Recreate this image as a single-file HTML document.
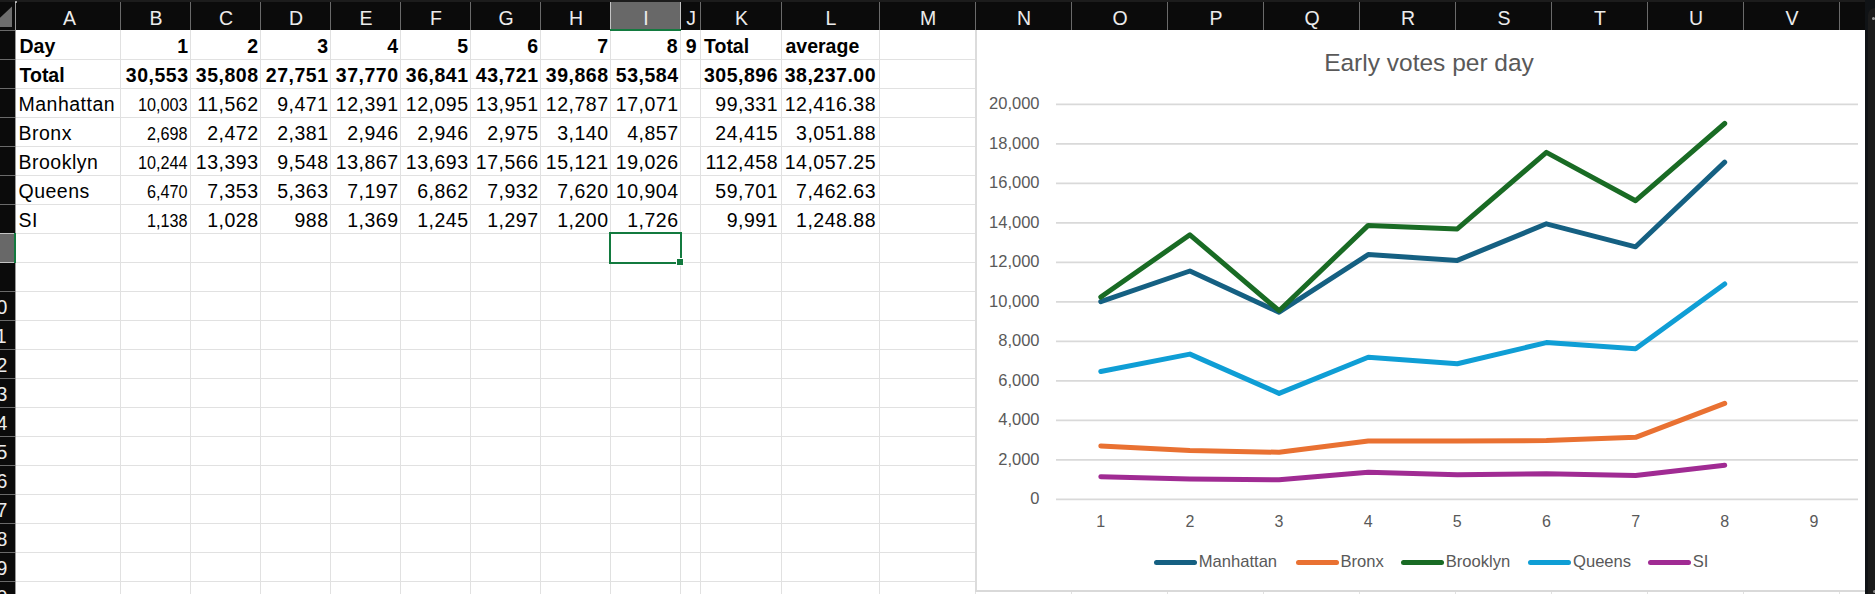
<!DOCTYPE html><html><head><meta charset="utf-8"><style>
html,body{margin:0;padding:0;}
body{width:1875px;height:594px;overflow:hidden;background:#fff;position:relative;font-family:"Liberation Sans",sans-serif;}
.a{position:absolute;}
.hd{position:absolute;top:2px;height:28px;background:#0b0b0b;}
.hl{position:absolute;top:4px;height:28px;line-height:28px;color:#ececec;font-size:19.5px;text-align:center;}
.c{position:absolute;height:29px;line-height:29px;font-size:19.5px;letter-spacing:0.5px;color:#000;white-space:nowrap;}
.r{text-align:right;}
.b{font-weight:bold;}
.t{letter-spacing:0;}
.sm{font-size:17.5px;letter-spacing:0;transform:translate(-1px,1px) scaleX(0.925);transform-origin:100% 50%;}
</style></head><body><div class="a" style="left:0;top:0;width:1875px;height:2px;background:#1c1c1c"></div>
<div class="hd" style="left:0;width:1875px"></div>
<div class="a" style="left:0;top:30px;width:15px;height:564px;background:#0b0b0b"></div>
<svg class="a" style="left:0;top:0" width="1875" height="594"><line x1="120.5" y1="30" x2="120.5" y2="594" stroke="#e1e1e1" stroke-width="1"/><line x1="190.5" y1="30" x2="190.5" y2="594" stroke="#e1e1e1" stroke-width="1"/><line x1="260.5" y1="30" x2="260.5" y2="594" stroke="#e1e1e1" stroke-width="1"/><line x1="330.5" y1="30" x2="330.5" y2="594" stroke="#e1e1e1" stroke-width="1"/><line x1="400.5" y1="30" x2="400.5" y2="594" stroke="#e1e1e1" stroke-width="1"/><line x1="470.5" y1="30" x2="470.5" y2="594" stroke="#e1e1e1" stroke-width="1"/><line x1="540.5" y1="30" x2="540.5" y2="594" stroke="#e1e1e1" stroke-width="1"/><line x1="610.5" y1="30" x2="610.5" y2="594" stroke="#e1e1e1" stroke-width="1"/><line x1="680.5" y1="30" x2="680.5" y2="594" stroke="#e1e1e1" stroke-width="1"/><line x1="700.5" y1="30" x2="700.5" y2="594" stroke="#e1e1e1" stroke-width="1"/><line x1="781.5" y1="30" x2="781.5" y2="594" stroke="#e1e1e1" stroke-width="1"/><line x1="879.5" y1="30" x2="879.5" y2="594" stroke="#e1e1e1" stroke-width="1"/><line x1="975.5" y1="30" x2="975.5" y2="594" stroke="#e1e1e1" stroke-width="1"/><line x1="1071.5" y1="30" x2="1071.5" y2="594" stroke="#e1e1e1" stroke-width="1"/><line x1="1167.5" y1="30" x2="1167.5" y2="594" stroke="#e1e1e1" stroke-width="1"/><line x1="1263.5" y1="30" x2="1263.5" y2="594" stroke="#e1e1e1" stroke-width="1"/><line x1="1359.5" y1="30" x2="1359.5" y2="594" stroke="#e1e1e1" stroke-width="1"/><line x1="1455.5" y1="30" x2="1455.5" y2="594" stroke="#e1e1e1" stroke-width="1"/><line x1="1551.5" y1="30" x2="1551.5" y2="594" stroke="#e1e1e1" stroke-width="1"/><line x1="1647.5" y1="30" x2="1647.5" y2="594" stroke="#e1e1e1" stroke-width="1"/><line x1="1743.5" y1="30" x2="1743.5" y2="594" stroke="#e1e1e1" stroke-width="1"/><line x1="1839.5" y1="30" x2="1839.5" y2="594" stroke="#e1e1e1" stroke-width="1"/><line x1="15" y1="59.5" x2="1875" y2="59.5" stroke="#e1e1e1" stroke-width="1"/><line x1="15" y1="88.5" x2="1875" y2="88.5" stroke="#e1e1e1" stroke-width="1"/><line x1="15" y1="117.5" x2="1875" y2="117.5" stroke="#e1e1e1" stroke-width="1"/><line x1="15" y1="146.5" x2="1875" y2="146.5" stroke="#e1e1e1" stroke-width="1"/><line x1="15" y1="175.5" x2="1875" y2="175.5" stroke="#e1e1e1" stroke-width="1"/><line x1="15" y1="204.5" x2="1875" y2="204.5" stroke="#e1e1e1" stroke-width="1"/><line x1="15" y1="233.5" x2="1875" y2="233.5" stroke="#e1e1e1" stroke-width="1"/><line x1="15" y1="262.5" x2="1875" y2="262.5" stroke="#e1e1e1" stroke-width="1"/><line x1="15" y1="291.5" x2="1875" y2="291.5" stroke="#e1e1e1" stroke-width="1"/><line x1="15" y1="320.5" x2="1875" y2="320.5" stroke="#e1e1e1" stroke-width="1"/><line x1="15" y1="349.5" x2="1875" y2="349.5" stroke="#e1e1e1" stroke-width="1"/><line x1="15" y1="378.5" x2="1875" y2="378.5" stroke="#e1e1e1" stroke-width="1"/><line x1="15" y1="407.5" x2="1875" y2="407.5" stroke="#e1e1e1" stroke-width="1"/><line x1="15" y1="436.5" x2="1875" y2="436.5" stroke="#e1e1e1" stroke-width="1"/><line x1="15" y1="465.5" x2="1875" y2="465.5" stroke="#e1e1e1" stroke-width="1"/><line x1="15" y1="494.5" x2="1875" y2="494.5" stroke="#e1e1e1" stroke-width="1"/><line x1="15" y1="523.5" x2="1875" y2="523.5" stroke="#e1e1e1" stroke-width="1"/><line x1="15" y1="552.5" x2="1875" y2="552.5" stroke="#e1e1e1" stroke-width="1"/><line x1="15" y1="581.5" x2="1875" y2="581.5" stroke="#e1e1e1" stroke-width="1"/><line x1="120.5" y1="2" x2="120.5" y2="30" stroke="#6a6a6a" stroke-width="1"/><line x1="190.5" y1="2" x2="190.5" y2="30" stroke="#6a6a6a" stroke-width="1"/><line x1="260.5" y1="2" x2="260.5" y2="30" stroke="#6a6a6a" stroke-width="1"/><line x1="330.5" y1="2" x2="330.5" y2="30" stroke="#6a6a6a" stroke-width="1"/><line x1="400.5" y1="2" x2="400.5" y2="30" stroke="#6a6a6a" stroke-width="1"/><line x1="470.5" y1="2" x2="470.5" y2="30" stroke="#6a6a6a" stroke-width="1"/><line x1="540.5" y1="2" x2="540.5" y2="30" stroke="#6a6a6a" stroke-width="1"/><line x1="610.5" y1="2" x2="610.5" y2="30" stroke="#6a6a6a" stroke-width="1"/><line x1="680.5" y1="2" x2="680.5" y2="30" stroke="#6a6a6a" stroke-width="1"/><line x1="700.5" y1="2" x2="700.5" y2="30" stroke="#6a6a6a" stroke-width="1"/><line x1="781.5" y1="2" x2="781.5" y2="30" stroke="#6a6a6a" stroke-width="1"/><line x1="879.5" y1="2" x2="879.5" y2="30" stroke="#6a6a6a" stroke-width="1"/><line x1="975.5" y1="2" x2="975.5" y2="30" stroke="#6a6a6a" stroke-width="1"/><line x1="1071.5" y1="2" x2="1071.5" y2="30" stroke="#6a6a6a" stroke-width="1"/><line x1="1167.5" y1="2" x2="1167.5" y2="30" stroke="#6a6a6a" stroke-width="1"/><line x1="1263.5" y1="2" x2="1263.5" y2="30" stroke="#6a6a6a" stroke-width="1"/><line x1="1359.5" y1="2" x2="1359.5" y2="30" stroke="#6a6a6a" stroke-width="1"/><line x1="1455.5" y1="2" x2="1455.5" y2="30" stroke="#6a6a6a" stroke-width="1"/><line x1="1551.5" y1="2" x2="1551.5" y2="30" stroke="#6a6a6a" stroke-width="1"/><line x1="1647.5" y1="2" x2="1647.5" y2="30" stroke="#6a6a6a" stroke-width="1"/><line x1="1743.5" y1="2" x2="1743.5" y2="30" stroke="#6a6a6a" stroke-width="1"/><line x1="1839.5" y1="2" x2="1839.5" y2="30" stroke="#6a6a6a" stroke-width="1"/><line x1="0" y1="30.5" x2="15" y2="30.5" stroke="#6a6a6a" stroke-width="1"/><line x1="0" y1="59.5" x2="15" y2="59.5" stroke="#6a6a6a" stroke-width="1"/><line x1="0" y1="88.5" x2="15" y2="88.5" stroke="#6a6a6a" stroke-width="1"/><line x1="0" y1="117.5" x2="15" y2="117.5" stroke="#6a6a6a" stroke-width="1"/><line x1="0" y1="146.5" x2="15" y2="146.5" stroke="#6a6a6a" stroke-width="1"/><line x1="0" y1="175.5" x2="15" y2="175.5" stroke="#6a6a6a" stroke-width="1"/><line x1="0" y1="204.5" x2="15" y2="204.5" stroke="#6a6a6a" stroke-width="1"/><line x1="0" y1="233.5" x2="15" y2="233.5" stroke="#6a6a6a" stroke-width="1"/><line x1="0" y1="262.5" x2="15" y2="262.5" stroke="#6a6a6a" stroke-width="1"/><line x1="0" y1="291.5" x2="15" y2="291.5" stroke="#6a6a6a" stroke-width="1"/><line x1="0" y1="320.5" x2="15" y2="320.5" stroke="#6a6a6a" stroke-width="1"/><line x1="0" y1="349.5" x2="15" y2="349.5" stroke="#6a6a6a" stroke-width="1"/><line x1="0" y1="378.5" x2="15" y2="378.5" stroke="#6a6a6a" stroke-width="1"/><line x1="0" y1="407.5" x2="15" y2="407.5" stroke="#6a6a6a" stroke-width="1"/><line x1="0" y1="436.5" x2="15" y2="436.5" stroke="#6a6a6a" stroke-width="1"/><line x1="0" y1="465.5" x2="15" y2="465.5" stroke="#6a6a6a" stroke-width="1"/><line x1="0" y1="494.5" x2="15" y2="494.5" stroke="#6a6a6a" stroke-width="1"/><line x1="0" y1="523.5" x2="15" y2="523.5" stroke="#6a6a6a" stroke-width="1"/><line x1="0" y1="552.5" x2="15" y2="552.5" stroke="#6a6a6a" stroke-width="1"/><line x1="0" y1="581.5" x2="15" y2="581.5" stroke="#6a6a6a" stroke-width="1"/><line x1="15.5" y1="2" x2="15.5" y2="594" stroke="#9a9a9a" stroke-width="1"/></svg>
<div class="hl" style="left:-27.5px;top:293px;width:48px;height:29px;line-height:29px;text-align:center">10</div>
<div class="hl" style="left:-27.5px;top:322px;width:48px;height:29px;line-height:29px;text-align:center">11</div>
<div class="hl" style="left:-27.5px;top:351px;width:48px;height:29px;line-height:29px;text-align:center">12</div>
<div class="hl" style="left:-27.5px;top:380px;width:48px;height:29px;line-height:29px;text-align:center">13</div>
<div class="hl" style="left:-27.5px;top:409px;width:48px;height:29px;line-height:29px;text-align:center">14</div>
<div class="hl" style="left:-27.5px;top:438px;width:48px;height:29px;line-height:29px;text-align:center">15</div>
<div class="hl" style="left:-27.5px;top:467px;width:48px;height:29px;line-height:29px;text-align:center">16</div>
<div class="hl" style="left:-27.5px;top:496px;width:48px;height:29px;line-height:29px;text-align:center">17</div>
<div class="hl" style="left:-27.5px;top:525px;width:48px;height:29px;line-height:29px;text-align:center">18</div>
<div class="hl" style="left:-27.5px;top:554px;width:48px;height:29px;line-height:29px;text-align:center">19</div>
<div class="hl" style="left:-27.5px;top:583px;width:48px;height:29px;line-height:29px;text-align:center">20</div>
<div class="a" style="left:610px;top:2px;width:71px;height:27px;background:#686868;border-left:1px solid #c4c4c4;border-right:1px solid #c4c4c4;box-sizing:border-box"></div>
<div class="a" style="left:610px;top:29px;width:71px;height:2px;background:#137a3f"></div>
<div class="a" style="left:0;top:233px;width:14px;height:30px;background:#686868;border-top:1px solid #c4c4c4;border-bottom:1px solid #c4c4c4;box-sizing:border-box"></div>
<div class="a" style="left:14px;top:233px;width:2px;height:30px;background:#137a3f"></div>
<div class="a" style="left:15px;top:1px;width:2px;height:2px;background:#d0d0d0;border-radius:50%"></div>
<svg class="a" style="left:0;top:0" width="15" height="30"><polygon points="-10,27 12,27 12,6.5" fill="#6e6e6e"/></svg>
<div class="hl" style="left:18px;width:103px">A</div>
<div class="hl" style="left:121px;width:70px">B</div>
<div class="hl" style="left:191px;width:70px">C</div>
<div class="hl" style="left:261px;width:70px">D</div>
<div class="hl" style="left:331px;width:70px">E</div>
<div class="hl" style="left:401px;width:70px">F</div>
<div class="hl" style="left:471px;width:70px">G</div>
<div class="hl" style="left:541px;width:70px">H</div>
<div class="hl" style="left:611px;width:70px">I</div>
<div class="hl" style="left:681px;width:20px">J</div>
<div class="hl" style="left:701px;width:81px">K</div>
<div class="hl" style="left:782px;width:98px">L</div>
<div class="hl" style="left:880px;width:96px">M</div>
<div class="hl" style="left:976px;width:96px">N</div>
<div class="hl" style="left:1072px;width:96px">O</div>
<div class="hl" style="left:1168px;width:96px">P</div>
<div class="hl" style="left:1264px;width:96px">Q</div>
<div class="hl" style="left:1360px;width:96px">R</div>
<div class="hl" style="left:1456px;width:96px">S</div>
<div class="hl" style="left:1552px;width:96px">T</div>
<div class="hl" style="left:1648px;width:96px">U</div>
<div class="hl" style="left:1744px;width:96px">V</div>
<div class="hl" style="left:1840px;width:96px">W</div>
<div class="c b t" style="left:19.5px;top:32px">Day</div>
<div class="c r b" style="left:120px;top:32px;width:68.5px">1</div>
<div class="c r b" style="left:190px;top:32px;width:68.5px">2</div>
<div class="c r b" style="left:260px;top:32px;width:68.5px">3</div>
<div class="c r b" style="left:330px;top:32px;width:68.5px">4</div>
<div class="c r b" style="left:400px;top:32px;width:68.5px">5</div>
<div class="c r b" style="left:470px;top:32px;width:68.5px">6</div>
<div class="c r b" style="left:540px;top:32px;width:68.5px">7</div>
<div class="c r b" style="left:609.5px;top:32px;width:68.5px">8</div>
<div class="c r b" style="left:678.5px;top:32px;width:18.5px">9</div>
<div class="c b t" style="left:704px;top:32px">Total</div>
<div class="c b t" style="left:785.5px;top:32px">average</div>
<div class="c b t" style="left:19.5px;top:61px">Total</div>
<div class="c r b" style="left:120px;top:61px;width:68.5px">30,553</div>
<div class="c r b" style="left:190px;top:61px;width:68.5px">35,808</div>
<div class="c r b" style="left:260px;top:61px;width:68.5px">27,751</div>
<div class="c r b" style="left:330px;top:61px;width:68.5px">37,770</div>
<div class="c r b" style="left:400px;top:61px;width:68.5px">36,841</div>
<div class="c r b" style="left:470px;top:61px;width:68.5px">43,721</div>
<div class="c r b" style="left:540px;top:61px;width:68.5px">39,868</div>
<div class="c r b" style="left:610px;top:61px;width:68.5px">53,584</div>
<div class="c r b" style="left:700px;top:61px;width:78px">305,896</div>
<div class="c r b" style="left:781px;top:61px;width:95px">38,237.00</div>
<div class="c" style="left:18.5px;top:90px">Manhattan</div>
<div class="c r sm" style="left:120px;top:90px;width:68.5px">10,003</div>
<div class="c r" style="left:190px;top:90px;width:68.5px">11,562</div>
<div class="c r" style="left:260px;top:90px;width:68.5px">9,471</div>
<div class="c r" style="left:330px;top:90px;width:68.5px">12,391</div>
<div class="c r" style="left:400px;top:90px;width:68.5px">12,095</div>
<div class="c r" style="left:470px;top:90px;width:68.5px">13,951</div>
<div class="c r" style="left:540px;top:90px;width:68.5px">12,787</div>
<div class="c r" style="left:610px;top:90px;width:68.5px">17,071</div>
<div class="c r" style="left:700px;top:90px;width:78px">99,331</div>
<div class="c r" style="left:781px;top:90px;width:95px">12,416.38</div>
<div class="c" style="left:18.5px;top:119px">Bronx</div>
<div class="c r sm" style="left:120px;top:119px;width:68.5px">2,698</div>
<div class="c r" style="left:190px;top:119px;width:68.5px">2,472</div>
<div class="c r" style="left:260px;top:119px;width:68.5px">2,381</div>
<div class="c r" style="left:330px;top:119px;width:68.5px">2,946</div>
<div class="c r" style="left:400px;top:119px;width:68.5px">2,946</div>
<div class="c r" style="left:470px;top:119px;width:68.5px">2,975</div>
<div class="c r" style="left:540px;top:119px;width:68.5px">3,140</div>
<div class="c r" style="left:610px;top:119px;width:68.5px">4,857</div>
<div class="c r" style="left:700px;top:119px;width:78px">24,415</div>
<div class="c r" style="left:781px;top:119px;width:95px">3,051.88</div>
<div class="c" style="left:18.5px;top:148px">Brooklyn</div>
<div class="c r sm" style="left:120px;top:148px;width:68.5px">10,244</div>
<div class="c r" style="left:190px;top:148px;width:68.5px">13,393</div>
<div class="c r" style="left:260px;top:148px;width:68.5px">9,548</div>
<div class="c r" style="left:330px;top:148px;width:68.5px">13,867</div>
<div class="c r" style="left:400px;top:148px;width:68.5px">13,693</div>
<div class="c r" style="left:470px;top:148px;width:68.5px">17,566</div>
<div class="c r" style="left:540px;top:148px;width:68.5px">15,121</div>
<div class="c r" style="left:610px;top:148px;width:68.5px">19,026</div>
<div class="c r" style="left:700px;top:148px;width:78px">112,458</div>
<div class="c r" style="left:781px;top:148px;width:95px">14,057.25</div>
<div class="c" style="left:18.5px;top:177px">Queens</div>
<div class="c r sm" style="left:120px;top:177px;width:68.5px">6,470</div>
<div class="c r" style="left:190px;top:177px;width:68.5px">7,353</div>
<div class="c r" style="left:260px;top:177px;width:68.5px">5,363</div>
<div class="c r" style="left:330px;top:177px;width:68.5px">7,197</div>
<div class="c r" style="left:400px;top:177px;width:68.5px">6,862</div>
<div class="c r" style="left:470px;top:177px;width:68.5px">7,932</div>
<div class="c r" style="left:540px;top:177px;width:68.5px">7,620</div>
<div class="c r" style="left:610px;top:177px;width:68.5px">10,904</div>
<div class="c r" style="left:700px;top:177px;width:78px">59,701</div>
<div class="c r" style="left:781px;top:177px;width:95px">7,462.63</div>
<div class="c" style="left:18.5px;top:206px">SI</div>
<div class="c r sm" style="left:120px;top:206px;width:68.5px">1,138</div>
<div class="c r" style="left:190px;top:206px;width:68.5px">1,028</div>
<div class="c r" style="left:260px;top:206px;width:68.5px">988</div>
<div class="c r" style="left:330px;top:206px;width:68.5px">1,369</div>
<div class="c r" style="left:400px;top:206px;width:68.5px">1,245</div>
<div class="c r" style="left:470px;top:206px;width:68.5px">1,297</div>
<div class="c r" style="left:540px;top:206px;width:68.5px">1,200</div>
<div class="c r" style="left:610px;top:206px;width:68.5px">1,726</div>
<div class="c r" style="left:700px;top:206px;width:78px">9,991</div>
<div class="c r" style="left:781px;top:206px;width:95px">1,248.88</div>
<div class="a" style="left:609px;top:232px;width:69px;height:28px;border:2px solid #137a3f;box-sizing:content-box"></div>
<div class="a" style="left:676px;top:258px;width:8px;height:8px;background:#fff"></div>
<div class="a" style="left:677px;top:259px;width:6px;height:6px;background:#137a3f"></div>
<svg class="a" style="left:0;top:0;font-family:'Liberation Sans',sans-serif" width="1875" height="594"><rect x="975" y="30" width="900" height="562" fill="#fff"/><line x1="976" y1="30" x2="976" y2="591" stroke="#d9d9d9" stroke-width="1.8"/><line x1="975" y1="591" x2="1875" y2="591" stroke="#d9d9d9" stroke-width="1.8"/><line x1="1056" y1="499.3" x2="1858" y2="499.3" stroke="#d9d9d9" stroke-width="1.8"/><text x="1039.5" y="504.2" text-anchor="end" font-size="16.5" fill="#595959">0</text><line x1="1056" y1="459.8" x2="1858" y2="459.8" stroke="#d9d9d9" stroke-width="1.8"/><text x="1039.5" y="464.7" text-anchor="end" font-size="16.5" fill="#595959">2,000</text><line x1="1056" y1="420.3" x2="1858" y2="420.3" stroke="#d9d9d9" stroke-width="1.8"/><text x="1039.5" y="425.2" text-anchor="end" font-size="16.5" fill="#595959">4,000</text><line x1="1056" y1="380.8" x2="1858" y2="380.8" stroke="#d9d9d9" stroke-width="1.8"/><text x="1039.5" y="385.7" text-anchor="end" font-size="16.5" fill="#595959">6,000</text><line x1="1056" y1="341.3" x2="1858" y2="341.3" stroke="#d9d9d9" stroke-width="1.8"/><text x="1039.5" y="346.2" text-anchor="end" font-size="16.5" fill="#595959">8,000</text><line x1="1056" y1="301.8" x2="1858" y2="301.8" stroke="#d9d9d9" stroke-width="1.8"/><text x="1039.5" y="306.7" text-anchor="end" font-size="16.5" fill="#595959">10,000</text><line x1="1056" y1="262.3" x2="1858" y2="262.3" stroke="#d9d9d9" stroke-width="1.8"/><text x="1039.5" y="267.2" text-anchor="end" font-size="16.5" fill="#595959">12,000</text><line x1="1056" y1="222.8" x2="1858" y2="222.8" stroke="#d9d9d9" stroke-width="1.8"/><text x="1039.5" y="227.70000000000002" text-anchor="end" font-size="16.5" fill="#595959">14,000</text><line x1="1056" y1="183.3" x2="1858" y2="183.3" stroke="#d9d9d9" stroke-width="1.8"/><text x="1039.5" y="188.20000000000002" text-anchor="end" font-size="16.5" fill="#595959">16,000</text><line x1="1056" y1="143.8" x2="1858" y2="143.8" stroke="#d9d9d9" stroke-width="1.8"/><text x="1039.5" y="148.70000000000002" text-anchor="end" font-size="16.5" fill="#595959">18,000</text><line x1="1056" y1="104.30000000000001" x2="1858" y2="104.30000000000001" stroke="#d9d9d9" stroke-width="1.8"/><text x="1039.5" y="109.20000000000002" text-anchor="end" font-size="16.5" fill="#595959">20,000</text><text x="1100.8" y="526.5" text-anchor="middle" font-size="16" fill="#595959">1</text><text x="1189.9299999999998" y="526.5" text-anchor="middle" font-size="16" fill="#595959">2</text><text x="1279.06" y="526.5" text-anchor="middle" font-size="16" fill="#595959">3</text><text x="1368.19" y="526.5" text-anchor="middle" font-size="16" fill="#595959">4</text><text x="1457.32" y="526.5" text-anchor="middle" font-size="16" fill="#595959">5</text><text x="1546.4499999999998" y="526.5" text-anchor="middle" font-size="16" fill="#595959">6</text><text x="1635.58" y="526.5" text-anchor="middle" font-size="16" fill="#595959">7</text><text x="1724.71" y="526.5" text-anchor="middle" font-size="16" fill="#595959">8</text><text x="1813.84" y="526.5" text-anchor="middle" font-size="16" fill="#595959">9</text><text x="1429" y="70.5" text-anchor="middle" font-size="24.5" fill="#595959">Early votes per day</text><polyline points="1100.8,301.7 1189.9,271.0 1279.1,312.2 1368.2,254.6 1457.3,260.4 1546.4,223.8 1635.6,246.8 1724.7,162.1" fill="none" stroke="#156082" stroke-width="5" stroke-linejoin="round" stroke-linecap="round"/><polyline points="1100.8,446.0 1189.9,450.5 1279.1,452.3 1368.2,441.1 1457.3,441.1 1546.4,440.5 1635.6,437.3 1724.7,403.4" fill="none" stroke="#E97132" stroke-width="5" stroke-linejoin="round" stroke-linecap="round"/><polyline points="1100.8,297.0 1189.9,234.8 1279.1,310.7 1368.2,225.4 1457.3,228.9 1546.4,152.4 1635.6,200.7 1724.7,123.5" fill="none" stroke="#196B24" stroke-width="5" stroke-linejoin="round" stroke-linecap="round"/><polyline points="1100.8,371.5 1189.9,354.1 1279.1,393.4 1368.2,357.2 1457.3,363.8 1546.4,342.6 1635.6,348.8 1724.7,283.9" fill="none" stroke="#0F9ED5" stroke-width="5" stroke-linejoin="round" stroke-linecap="round"/><polyline points="1100.8,476.8 1189.9,479.0 1279.1,479.8 1368.2,472.3 1457.3,474.7 1546.4,473.7 1635.6,475.6 1724.7,465.2" fill="none" stroke="#A02B93" stroke-width="5" stroke-linejoin="round" stroke-linecap="round"/><line x1="1156.5" y1="562.5" x2="1194.5" y2="562.5" stroke="#156082" stroke-width="5" stroke-linecap="round"/><text x="1198.7" y="567" font-size="16.6" fill="#595959">Manhattan</text><line x1="1298.5" y1="562.5" x2="1336.5" y2="562.5" stroke="#E97132" stroke-width="5" stroke-linecap="round"/><text x="1340.5" y="567" font-size="16.6" fill="#595959">Bronx</text><line x1="1403.5" y1="562.5" x2="1441.5" y2="562.5" stroke="#196B24" stroke-width="5" stroke-linecap="round"/><text x="1445.7" y="567" font-size="16.6" fill="#595959">Brooklyn</text><line x1="1530.5" y1="562.5" x2="1568.5" y2="562.5" stroke="#0F9ED5" stroke-width="5" stroke-linecap="round"/><text x="1573" y="567" font-size="16.6" fill="#595959">Queens</text><line x1="1650.5" y1="562.5" x2="1688.5" y2="562.5" stroke="#A02B93" stroke-width="5" stroke-linecap="round"/><text x="1692.7" y="567" font-size="16.6" fill="#595959">SI</text></svg>
<div class="a" style="left:1865px;top:0;width:10px;height:594px;background:#101316"></div>
<div class="a" style="left:1868px;top:8px;width:14px;height:600px;background:#1b1b1b;border-radius:7px 0 0 0"></div>
<div class="a" style="left:1872px;top:17px;width:3px;height:3px;background:#9a9a9a;border-radius:50%"></div>
<div class="a" style="left:1873px;top:590px;width:3px;height:3px;background:#8a8a8a;border-radius:50%"></div></body></html>
